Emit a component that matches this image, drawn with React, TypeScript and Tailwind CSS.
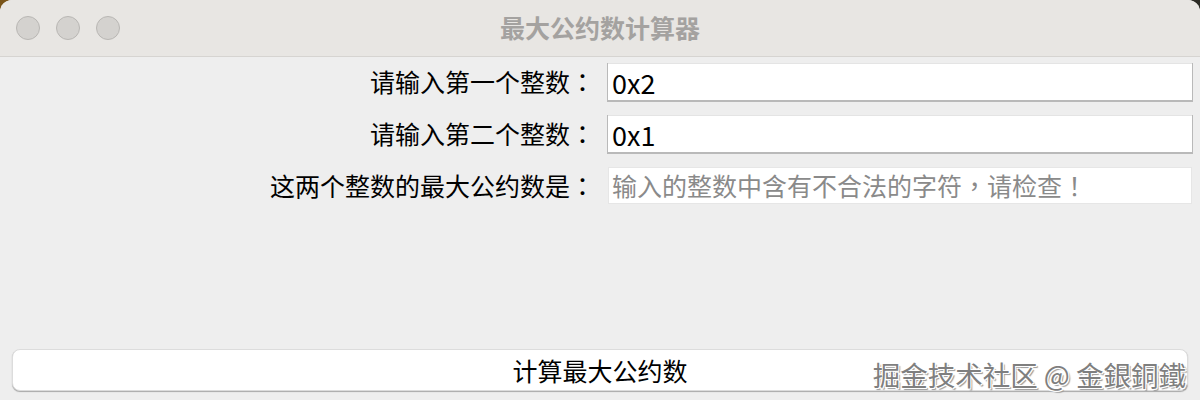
import React, { useState } from "react";

const font = { fontFamily: '"Noto Sans CJK SC", "Noto Sans", sans-serif' };
const tc = { fontFamily: '"Noto Sans CJK TC", "Noto Sans CJK SC", sans-serif' };

type RowProps = {
  label: string;
  value: string;
  onChange?: (v: string) => void;
  readOnly?: boolean;
};

const Row: React.FC<RowProps> = ({ label, value, onChange, readOnly }) => {
  return (
    <div className="flex items-center h-[37px]">
      <div className="w-[598px] text-right text-[25px] text-black pr-[3px] leading-none">
        {label}
        <span style={tc}>：</span>
      </div>
      <div className="ml-[10px] w-[584px] h-full">
        {readOnly ? (
          <div className="h-full bg-white border border-[#e6e6e6] flex items-center pl-[3px] text-[25px] text-[#8a8a8a] leading-none">
            输入的整数中含有不合法的字符<span style={tc}>，</span>请检查<span style={tc}>！</span>
          </div>
        ) : (
          <input
            className="w-full h-full bg-white border-t border-[#e4e4e4] shadow-[0_1px_0_1px_#b9b9b9] pl-[4px] text-[27px] text-black outline-none"
            style={font}
            value={value}
            onChange={(e) => onChange && onChange(e.target.value)}
          />
        )}
      </div>
    </div>
  );
};

export default function App() {
  const [first, setFirst] = useState("0x2");
  const [second, setSecond] = useState("0x1");

  return (
    <div
      className="w-[1200px] h-[400px] bg-[linear-gradient(90deg,#7a5418,#3a3325_40%,#2b2b25)] overflow-hidden"
      style={font}
    >
      <div className="w-full h-full rounded-t-[12px] overflow-hidden bg-[#eeeeee] flex flex-col relative">
        {/* title bar */}
        <div className="h-[57px] shrink-0 bg-[#e8e6e3] border-b border-[#d6d4d1] flex items-center relative">
          <div className="flex gap-[16px] pl-[16px]">
            <span className="w-[24px] h-[24px] rounded-full bg-[#d4d2cf] border border-[#b9b7b4]" />
            <span className="w-[24px] h-[24px] rounded-full bg-[#d4d2cf] border border-[#b9b7b4]" />
            <span className="w-[24px] h-[24px] rounded-full bg-[#d4d2cf] border border-[#b9b7b4]" />
          </div>
          <div className="absolute inset-0 flex items-center justify-center text-[25px] font-bold text-[#a4a2a0]">
            最大公约数计算器
          </div>
        </div>

        {/* form */}
        <div className="flex flex-col gap-[15px] pt-[6px]">
          <Row label="请输入第一个整数" value={first} onChange={setFirst} />
          <Row label="请输入第二个整数" value={second} onChange={setSecond} />
          <Row label="这两个整数的最大公约数是" value="" readOnly />
        </div>

        <div className="flex-1" />

        <div className="px-[12px] pb-[9px]">
          <button className="w-full h-[42px] bg-white rounded-[8px] border border-[#dcdcdc] shadow-[0_1px_1px_#a8a8a8] text-[25px] text-black leading-none">
            计算最大公约数
          </button>
        </div>

        {/* watermark */}
        <div className="absolute right-[14px] bottom-[12px] text-[27.5px] leading-none text-[#7f7f7f] [text-shadow:1px_1px_0_#ffffff,-1px_-1px_0_#ffffff,1px_-1px_0_#ffffff,-1px_1px_0_#ffffff,2px_2px_1px_#9a9a9a] pointer-events-none">
          掘金技术社区 @ 金銀銅鐵
        </div>
      </div>
    </div>
  );
}
